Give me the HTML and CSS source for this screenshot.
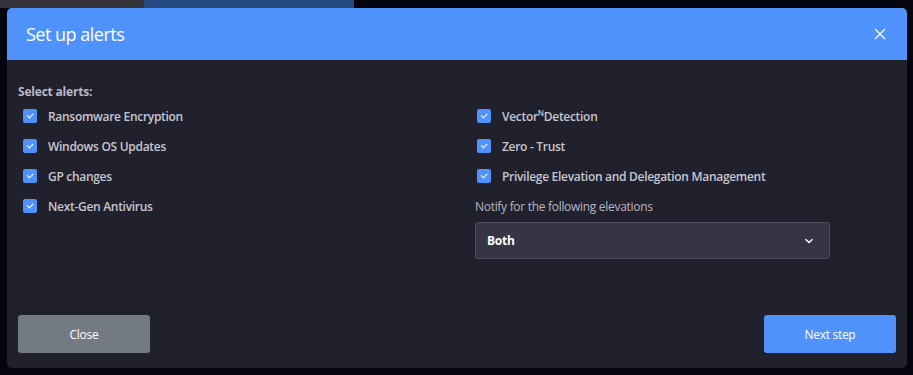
FILE: index.html
```html
<!DOCTYPE html>
<html lang="en">
<head>
  <meta charset="UTF-8">
  <meta name="viewport" content="width=device-width, initial-scale=1.0">
  <title>Set up alerts</title>
  <link rel="stylesheet" href="styles.css">
</head>
<body>
  <div class="modal">
    <header class="modal-header">
      <h2>Set up alerts</h2>
      <button class="botao-fechar" aria-label="Close">
        <svg width="12" height="12" viewBox="0 0 12 12"><path d="M1 1L11 11M11 1L1 11" stroke="#fff" stroke-width="1.3" fill="none"/></svg>
      </button>
    </header>

    <main class="modal-body">
      <div class="coluna">
        <p class="titulo">Select alerts:</p>
        <ul class="alertas">
          <li><span class="check"></span>Ransomware Encryption</li>
          <li><span class="check"></span>Windows OS Updates</li>
          <li><span class="check"></span>GP changes</li>
          <li><span class="check"></span>Next-Gen Antivirus</li>
        </ul>
      </div>
      <div class="coluna direita">
        <ul class="alertas">
          <li><span class="check"></span>Vector<sup>N</sup>Detection</li>
          <li><span class="check"></span>Zero - Trust</li>
          <li><span class="check"></span>Privilege Elevation and Delegation Management</li>
        </ul>
        <label class="rotulo">Notify for the following elevations</label>
        <div class="select">
          <span>Both</span>
          <svg width="10" height="6" viewBox="0 0 10 6"><path d="M1.5 1.2L5 4.5L8.5 1.2" stroke="#fff" stroke-width="1.5" fill="none"/></svg>
        </div>
      </div>
    </main>

    <footer class="modal-footer">
      <button class="botao botao-cinza">Close</button>
      <button class="botao botao-azul">Next step</button>
    </footer>
  </div>
</body>
</html>
```

FILE: styles.css
```css
* {
  box-sizing: border-box;
  margin: 0;
  padding: 0;
}

body {
  background: linear-gradient(to right, #35343c 0 144px, #26497f 144px 354px, #05050f 354px) no-repeat top left / 100% 8px, #05050f;
  height: 100vh;
  font-family: "Open Sans", "Noto Sans", sans-serif;
  overflow: hidden;
}

.modal {
  width: 900px;
  height: 360px;
  margin: 8px 0 0 7px;
  background-color: #21212e;
  border-radius: 5px;
  display: flex;
  flex-direction: column;
  overflow: hidden;
}

.modal-header {
  height: 52px;
  background-color: #4f92fb;
  display: flex;
  align-items: center;
  justify-content: space-between;
  padding: 0 21px 0 19px;
}

.modal-header h2 {
  color: white;
  font-size: 18px;
  font-weight: 400;
  letter-spacing: -0.5px;
}

.botao-fechar {
  background: none;
  border: none;
  display: flex;
  cursor: pointer;
}

.modal-body {
  flex-grow: 1;
  display: grid;
  grid-template-columns: 457px 1fr;
  padding: 24px 11px 0 11px;
}

.titulo {
  color: #b9b9c6;
  font-size: 12px;
  font-weight: 700;
  line-height: 16px;
  letter-spacing: -0.2px;
  margin-bottom: 1px;
}

.alertas {
  list-style: none;
}

.alertas li {
  display: flex;
  align-items: center;
  height: 30px;
  color: #c6c6d0;
  font-size: 12px;
  font-weight: 600;
  letter-spacing: -0.3px;
}

.coluna .alertas {
  padding-left: 5px;
}

.direita .alertas {
  padding-left: 2px;
  margin-top: 17px;
}

.alertas sup {
  font-size: 8px;
  line-height: 0;
  position: relative;
  top: -3px;
}

.check {
  width: 14px;
  height: 14px;
  border-radius: 2px;
  background-color: #4f92fb;
  margin-right: 11px;
  position: relative;
}

.check::after {
  content: "";
  position: absolute;
  left: 4px;
  top: 4px;
  width: 5px;
  height: 2.5px;
  border-left: 1.5px solid white;
  border-bottom: 1.5px solid white;
  transform: rotate(-45deg);
}

.rotulo {
  display: block;
  color: #b6b6c2;
  font-size: 12px;
  line-height: 16px;
  letter-spacing: -0.3px;
  margin-top: 8px;
}

.select {
  width: 355px;
  height: 37px;
  margin-top: 7px;
  background-color: #353545;
  border: 1px solid #4d4d5e;
  border-radius: 3px;
  display: flex;
  align-items: center;
  justify-content: space-between;
  padding: 0 15px 0 11px;
  color: white;
  font-size: 12px;
  font-weight: 700;
  letter-spacing: -0.2px;
}

.modal-footer {
  display: flex;
  justify-content: space-between;
  padding: 0 11px 15px 11px;
}

.botao {
  width: 132px;
  height: 38px;
  border: none;
  border-radius: 3px;
  color: white;
  font-family: "Open Sans", "Noto Sans", sans-serif;
  font-size: 12px;
  letter-spacing: -0.3px;
  cursor: pointer;
}

.botao-cinza {
  background-color: #737a81;
}

.botao-azul {
  background-color: #4f92fb;
}
```
